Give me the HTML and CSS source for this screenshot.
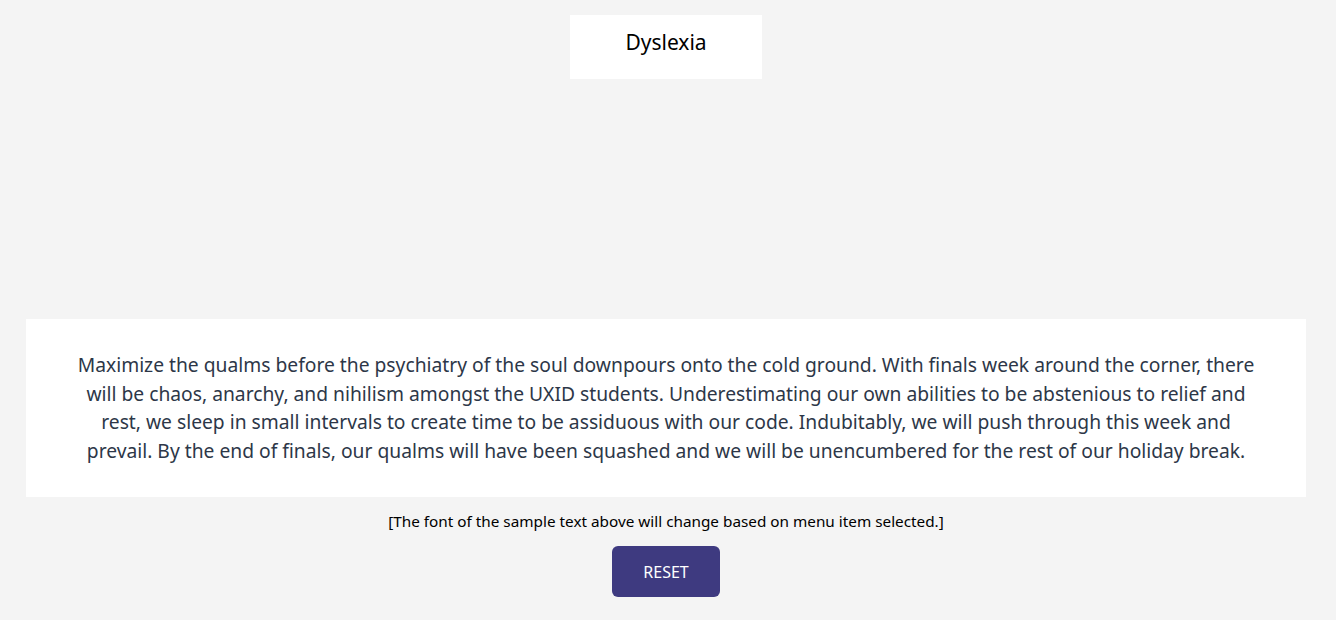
FILE: index.html
```html
<!DOCTYPE html>
<html>
<head>
<meta charset="utf-8">
<link rel="stylesheet" href="styles.css">
</head>
<body>
<div class="page">
  <div class="menu">Dyslexia</div>
  <div class="sample">
    <p>Maximize the qualms before the psychiatry of the soul downpours onto the cold ground. With finals week around the corner, there will be chaos, anarchy, and nihilism amongst the UXID students. Underestimating our own abilities to be abstenious to relief and rest, we sleep in small intervals to create time to be assiduous with our code. Indubitably, we will push through this week and prevail. By the end of finals, our qualms will have been squashed and we will be unencumbered for the rest of our holiday break.</p>
  </div>
  <div class="caption">[The font of the sample text above will change based on menu item selected.]</div>
  <button class="reset">RESET</button>
</div>
</body>
</html>
```
FILE: styles.css
```css
html, body {
  margin: 0;
  padding: 0;
  background: #f4f4f4;
}
.page {
  display: flex;
  flex-direction: column;
  align-items: center;
  padding-top: 15px;
  padding-right: 4px;
  font-family: "Noto Sans", sans-serif;
}
.menu {
  width: 192px;
  height: 64px;
  background: #ffffff;
  box-sizing: border-box;
  padding-top: 13px;
  text-align: center;
  font-size: 21px;
  line-height: 29px;
  color: #000;
}
.sample {
  margin-top: 240px;
  width: 1280px;
  height: 178px;
  box-sizing: border-box;
  background: #ffffff;
  padding: 32px 40px 0;
}
.sample p {
  margin: 0;
  text-align: center;
  font-size: 19.25px;
  line-height: 28.5px;
  color: #2d3748;
}
.caption {
  margin-top: 13px;
  font-size: 15.3px;
  line-height: 22px;
  color: #000;
}
.reset {
  margin-top: 14px;
  width: 108px;
  height: 51px;
  border: none;
  border-radius: 6px;
  background: #3e3a80;
  color: #fff;
  font-family: "Noto Sans", sans-serif;
  font-size: 16px;
  padding: 0;
}
```
